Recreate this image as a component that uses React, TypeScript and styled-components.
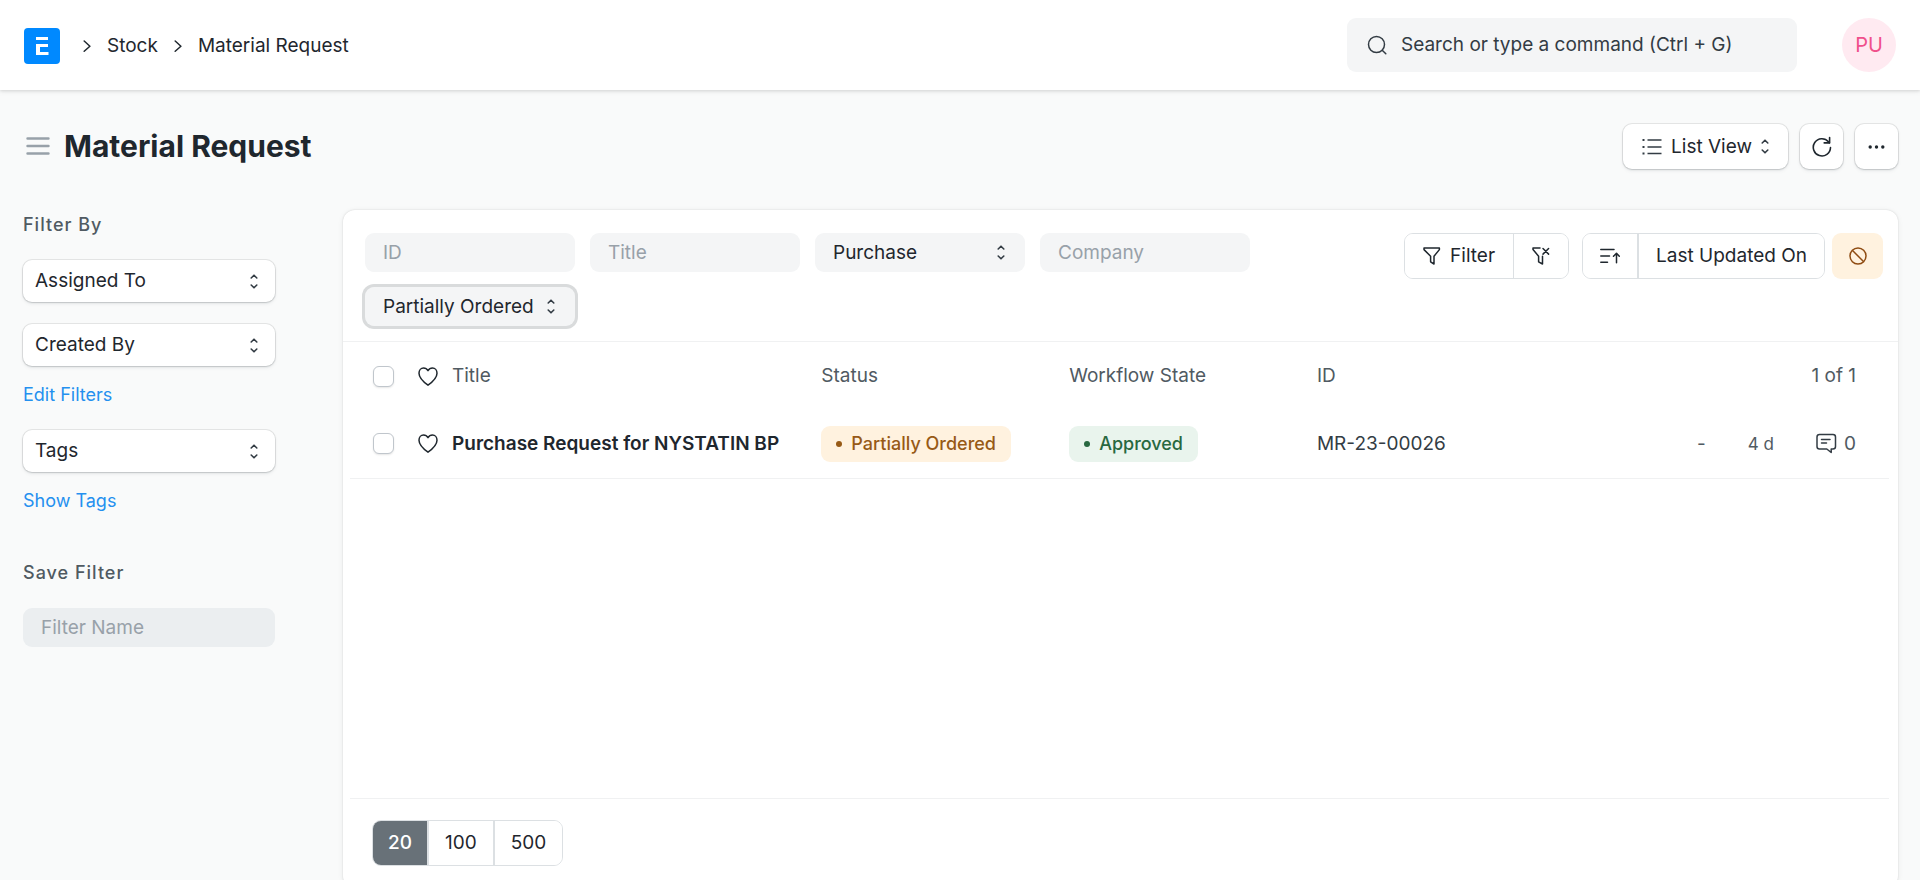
import React from "react";
import styled, { createGlobalStyle } from "styled-components";

const GlobalStyle = createGlobalStyle`
  *, *::before, *::after { box-sizing: border-box; }
  body {
    margin: 0;
    background: #f9fafa;
    color: #1f272e;
    font-family: Inter, "Liberation Sans", sans-serif;
    font-size: 19px;
    line-height: 30px;
    -webkit-font-smoothing: antialiased;
  }
  button, input, select { font: inherit; color: inherit; margin: 0; }
  button { cursor: pointer; }
  h1, h2 { margin: 0; }
  svg { display: block; flex: none; }
`;

const Navbar = styled.header`
  height: 90px;
  padding: 0 24px;
  display: flex;
  align-items: center;
  justify-content: space-between;
  background: #fff;
  box-shadow: 0 1px 3px rgba(0, 0, 0, 0.12), 0 2px 6px rgba(0, 0, 0, 0.05);
`;

const Breadcrumbs = styled.nav`
  display: flex;
  align-items: center;
  gap: 16px;
  padding-top: 1px;
`;

const HomeLink = styled.a`
  display: block;
  margin-right: 7px;
`;

const Crumb = styled.a`
  color: #1f272e;
  text-decoration: none;
`;

const NavRight = styled.div`
  display: flex;
  align-items: center;
  gap: 45px;
`;

const SearchBox = styled.label`
  display: flex;
  align-items: center;
  gap: 14px;
  width: 450px;
  height: 54px;
  padding: 0 20px;
  border-radius: 9px;
  background: #f4f5f6;
  color: #333c44;
`;

const SearchInput = styled.input`
  flex: 1;
  min-width: 0;
  padding: 0;
  border: 0;
  outline: 0;
  background: none;
  &::placeholder { color: #333c44; opacity: 1; }
`;

const Avatar = styled.button`
  width: 54px;
  height: 54px;
  padding: 0;
  border: 0;
  border-radius: 50%;
  background: #ffeaf1;
  color: #f0508c;
  font-size: 20px;
`;

const PageHead = styled.div`
  display: flex;
  align-items: center;
  justify-content: space-between;
  height: 113px;
  padding: 0 22px 0 25px;
`;

const TitleGroup = styled.div`
  display: flex;
  align-items: center;
  gap: 12px;
  padding-bottom: 2px;
`;

const MenuToggle = styled.button`
  padding: 0;
  border: 0;
  background: none;
  color: #98a1a9;
`;

const PageTitle = styled.h1`
  font-size: 30px;
  line-height: 40px;
  font-weight: 700;
`;

const HeadActions = styled.div`
  display: flex;
  gap: 12px;
`;

const raised = `
  border: 0;
  background: #fff;
  box-shadow: 0 0 0 1px rgba(0, 0, 0, 0.08), 0 1px 2px rgba(25, 39, 52, 0.14), 0 2px 4px rgba(25, 39, 52, 0.06);
`;

const HeadButton = styled.button<{ $square?: boolean }>`
  ${raised}
  display: flex;
  align-items: center;
  justify-content: center;
  gap: 9px;
  height: 45px;
  width: ${(p) => (p.$square ? "43px" : "auto")};
  padding: ${(p) => (p.$square ? "0" : "0 19px")};
  border-radius: 9px;
`;

const Layout = styled.div`
  display: flex;
  align-items: flex-start;
  padding: 7px 22px 0 23px;
`;

const Sidebar = styled.aside`
  flex: none;
  width: 252px;
  margin-right: 68px;
  padding-top: 1px;
`;

const SideHeading = styled.h2`
  margin-bottom: 21px;
  font-size: 18px;
  line-height: 28px;
  font-weight: 500;
  letter-spacing: 1px;
  color: #505a62;
`;

const SelectWrap = styled.div`
  position: relative;
`;

const SelectIcon = styled.span<{ $right: number }>`
  position: absolute;
  top: 0;
  bottom: 0;
  right: ${(p) => p.$right}px;
  display: flex;
  align-items: center;
  pointer-events: none;
`;

const SideSelect = styled.select`
  ${raised}
  appearance: none;
  display: block;
  width: 100%;
  height: 42px;
  padding: 0 12px;
  border-radius: 9px;
`;

const SideFilters = styled.div`
  display: grid;
  gap: 22px;
`;

const SideLink = styled.a`
  display: block;
  margin: 15px 0 21px;
  font-size: 18px;
  line-height: 28px;
  color: #2490ef;
  text-decoration: none;
`;

const SaveFilter = styled.section`
  padding-top: 23px;
`;

const FieldInput = styled.input<{ $dark?: boolean }>`
  display: block;
  width: 100%;
  height: 39px;
  padding: 0 18px;
  border: 0;
  border-radius: 9px;
  background: ${(p) => (p.$dark ? "#ebeef0" : "#f4f5f6")};
  &::placeholder { color: #98a1a9; opacity: 1; }
`;

const FieldSelect = styled.select<{ $focused?: boolean }>`
  appearance: none;
  display: block;
  width: 100%;
  height: 39px;
  padding: 0 18px;
  border: 0;
  border-radius: 9px;
  background: #f4f5f6;
  outline: 0;
  box-shadow: ${(p) => (p.$focused ? "0 0 0 3px #d9dbdc" : "none")};
`;

const Panel = styled.main`
  flex: 1;
  min-width: 0;
  border-radius: 12px;
  background: #fff;
  box-shadow: 0 0 2px rgba(0, 0, 0, 0.14), 0 1px 6px rgba(0, 0, 0, 0.06);
`;

const FilterBar = styled.div`
  display: flex;
  align-items: flex-start;
  justify-content: space-between;
  gap: 24px;
  padding: 23px 15px 15px 22px;
  border-bottom: 1px solid #f0f1f2;
`;

const StandardFilters = styled.div`
  display: grid;
  grid-template-columns: repeat(4, 210px);
  gap: 15px;
`;

const FilterActions = styled.div`
  display: flex;
  flex: none;
`;

const ButtonGroup = styled.div`
  display: flex;
  height: 46px;
  border: 1px solid #dce0e3;
  border-radius: 9px;
  overflow: hidden;
  & + & { margin-left: 13px; }
`;

const GroupButton = styled.button<{ $rule?: number; $pad: number; $active?: boolean }>`
  display: flex;
  align-items: center;
  gap: 9px;
  padding: 0 ${(p) => p.$pad}px;
  border: 0;
  border-left: ${(p) => p.$rule || 0}px solid #dce0e3;
  background: ${(p) => (p.$active ? "#687178" : "#fff")};
  color: ${(p) => (p.$active ? "#fff" : "#1f272e")};
  font-weight: ${(p) => (p.$active ? 500 : 400)};
`;

const WarnButton = styled.button`
  display: flex;
  align-items: center;
  justify-content: center;
  width: 51px;
  height: 46px;
  margin-left: 7px;
  padding: 0;
  border: 0;
  border-radius: 9px;
  background: #fff2df;
  color: #8f4c12;
`;

const ListArea = styled.div`
  min-height: calc(100vh - 423px);
  margin: 0 9px 0 7px;
  border-bottom: 1px solid #f0f1f2;
`;

const List = styled.table`
  width: 100%;
  table-layout: fixed;
  border-collapse: collapse;
  th, td { height: 68px; padding: 0; text-align: left; font-weight: 400; }
  th { color: #505a62; }
  td { color: #333c44; border-bottom: 1px solid #f0f1f2; }
  th:first-child, td:first-child { width: 102px; padding-left: 23px; }
  th:last-child, td:last-child { padding-right: 33px; text-align: right; }
`;

const Col = styled.col<{ $w?: string }>`
  width: ${(p) => p.$w || "auto"};
`;

const Marks = styled.div`
  display: flex;
  align-items: center;
  gap: 24px;
  color: #1f272e;
`;

const Check = styled.input`
  appearance: none;
  flex: none;
  width: 21px;
  height: 21px;
  margin: 0;
  border: 1px solid #c0c6cc;
  border-radius: 6px;
  background: #fff;
  box-shadow: 0 1px 2px rgba(0, 0, 0, 0.1);
`;

const LikeButton = styled.button`
  padding: 0;
  border: 0;
  background: none;
`;

const TitleLink = styled.a`
  color: #1f272e;
  font-weight: 600;
  text-decoration: none;
  white-space: nowrap;
`;

const Pill = styled.span<{ $tone: "orange" | "green" }>`
  display: inline-flex;
  align-items: center;
  gap: 9px;
  height: 36px;
  padding: 0 15px;
  border-radius: 9px;
  font-size: 18px;
  font-weight: 500;
  vertical-align: middle;
  background: ${(p) => (p.$tone === "orange" ? "#fff2df" : "#e9f4ed")};
  color: ${(p) => (p.$tone === "orange" ? "#975a16" : "#286840")};
  &::before {
    content: "";
    width: 6px;
    height: 6px;
    border-radius: 50%;
    background: currentColor;
  }
`;

const Activity = styled.div`
  display: flex;
  align-items: center;
  justify-content: flex-end;
  gap: 42px;
  color: #505a62;
`;

const Age = styled.span`
  font-size: 17px;
`;

const Comments = styled.span`
  display: flex;
  align-items: center;
  gap: 7px;
`;

const Paging = styled.footer`
  display: flex;
  padding: 21px 29px 22px;
`;

const Chevron = () => (
  <svg width="8" height="12" viewBox="0 0 8 12" fill="none" stroke="#1f272e" strokeWidth="1.5" strokeLinecap="round" strokeLinejoin="round">
    <path d="M1.2 1 6.900 6.200 1.200 11.200" />
  </svg>
);

const UpDown = () => (
  <svg width="8" height="15" viewBox="0 0 8 15" fill="none" stroke="#333c44" strokeWidth="1.6" strokeLinecap="round" strokeLinejoin="round">
    <path d="M1.2 4 4 1.2 6.8 4M1.2 11 4 13.8 6.8 11" />
  </svg>
);

const Heart = () => (
  <svg width="20" height="19" viewBox="0 0 20 19" fill="none" stroke="#1f272e" strokeWidth="1.5" strokeLinejoin="round">
    <path d="M10 3.6C8.8 1.6 7.3 1 5.5 1 3 1 1 3 1 6.200c0 5 4.500 8.700 9 12 4.500-3.300 9-7 9-12C19 3 17 1 14.500 1 12.700 1 11.200 1.600 10 3.600Z" />
  </svg>
);

const funnel = "M1 1H16.400V2.600L11 9.200V17L7.600 14.800V9.200L1 2.600Z";

function Pick({ label, options = [] }: { label: string; options?: string[] }) {
  return (
    <SelectWrap>
      <SideSelect aria-label={label} defaultValue={label}>
        {[label, ...options].map((o) => <option key={o}>{o}</option>)}
      </SideSelect>
      <SelectIcon $right={17}><UpDown /></SelectIcon>
    </SelectWrap>
  );
}

export default function App() {
  return (
    <>
      <GlobalStyle />
      <Navbar>
        <Breadcrumbs aria-label="Breadcrumb">
          <HomeLink href="#" aria-label="Home">
            <svg width="36" height="36" viewBox="0 0 36 36">
              <rect width="36" height="36" rx="4" fill="#0089ff" />
              <path d="M12 9H24V12H12ZM12 16H24V19H16V24H24.500V27H12Z" fill="#fff" />
            </svg>
          </HomeLink>
          <Chevron />
          <Crumb href="#">Stock</Crumb>
          <Chevron />
          <Crumb href="#">Material Request</Crumb>
        </Breadcrumbs>
        <NavRight>
          <SearchBox>
            <svg width="20" height="20" viewBox="0 0 20 20" fill="none" stroke="#333c44" strokeWidth="1.5" strokeLinecap="round">
              <circle cx="9.500" cy="9.500" r="8" />
              <path d="m15.200 15.200 3.600 3.600" />
            </svg>
            <SearchInput aria-label="Search" placeholder="Search or type a command (Ctrl + G)" />
          </SearchBox>
          <Avatar>PU</Avatar>
        </NavRight>
      </Navbar>

      <PageHead>
        <TitleGroup>
          <MenuToggle aria-label="Toggle sidebar">
            <svg width="27" height="20" viewBox="0 0 27 20" stroke="#98a1a9" strokeWidth="2.400" strokeLinecap="round">
              <path d="M2.500 2.500H23.500M2.500 10H23.500M2.500 17.500H23.500" />
            </svg>
          </MenuToggle>
          <PageTitle>Material Request</PageTitle>
        </TitleGroup>
        <HeadActions>
          <HeadButton>
            <svg width="20" height="17" viewBox="0 0 20 17" stroke="#333c44" strokeWidth="1.600">
              <path d="M5.500 2H19.500M5.500 9H19.500M5.500 15.500H19.500" />
              <path d="M.5 2H2.500M.5 9H2.500M.5 15.500H2.500" strokeWidth="2" />
            </svg>
            List View
            <UpDown />
          </HeadButton>
          <HeadButton $square aria-label="Refresh">
            <svg width="20" height="22" viewBox="0 0 20 22" fill="none" stroke="#1f272e" strokeWidth="1.600" strokeLinecap="round" strokeLinejoin="round">
              <path d="M18.500 11.500A8.600 8.600 0 1 1 16.500 5.800L17.300 6.800" />
              <path d="M17.600 1.500V6.900H12.200" />
            </svg>
          </HeadButton>
          <HeadButton $square aria-label="More">
            <svg width="17" height="4" viewBox="0 0 17 4" fill="#1f272e">
              <circle cx="2.200" cy="2" r="1.700" /><circle cx="8.500" cy="2" r="1.700" /><circle cx="14.800" cy="2" r="1.700" />
            </svg>
          </HeadButton>
        </HeadActions>
      </PageHead>

      <Layout>
        <Sidebar>
          <SideHeading>Filter By</SideHeading>
          <SideFilters>
            <Pick label="Assigned To" />
            <Pick label="Created By" />
          </SideFilters>
          <SideLink href="#">Edit Filters</SideLink>
          <Pick label="Tags" />
          <SideLink href="#">Show Tags</SideLink>
          <SaveFilter>
            <SideHeading>Save Filter</SideHeading>
            <FieldInput $dark aria-label="Filter Name" placeholder="Filter Name" />
          </SaveFilter>
        </Sidebar>

        <Panel>
          <FilterBar>
            <StandardFilters>
              <FieldInput aria-label="ID" placeholder="ID" />
              <FieldInput aria-label="Title" placeholder="Title" />
              <SelectWrap>
                <FieldSelect aria-label="Purpose" defaultValue="Purchase">
                  <option>Purchase</option>
                </FieldSelect>
                <SelectIcon $right={20}><UpDown /></SelectIcon>
              </SelectWrap>
              <FieldInput aria-label="Company" placeholder="Company" />
              <SelectWrap>
                <FieldSelect $focused aria-label="Status" defaultValue="Partially Ordered">
                  <option>Partially Ordered</option>
                </FieldSelect>
                <SelectIcon $right={20}><UpDown /></SelectIcon>
              </SelectWrap>
            </StandardFilters>
            <FilterActions>
              <ButtonGroup>
                <GroupButton $pad={18}>
                  <svg width="18" height="18" viewBox="0 0 18 18" fill="none" stroke="#1f272e" strokeWidth="1.500" strokeLinejoin="round">
                    <path d={funnel} />
                  </svg>
                  Filter
                </GroupButton>
                <GroupButton $pad={18} $rule={1} aria-label="Clear filters">
                  <svg width="18" height="18" viewBox="0 0 18 18" fill="none" stroke="#1f272e" strokeWidth="1.500" strokeLinejoin="round" strokeLinecap="round">
                    <path d="M8 1H1V2.600L6.600 9.200V14.800L10.500 17V9.200" />
                    <path d="m11 1.500 5.600 5.600M16.600 1.500 11 7.100" />
                  </svg>
                </GroupButton>
              </ButtonGroup>
              <ButtonGroup>
                <GroupButton $pad={17} aria-label="Sort direction">
                  <svg width="20" height="16" viewBox="0 0 20 16" fill="none" stroke="#1f272e" strokeWidth="1.500" strokeLinecap="round" strokeLinejoin="round">
                    <path d="M.8 1.500H14M.8 8H9.500M.8 14.200H7.500M16.500 14.800V5.500M13.500 8.200 16.500 5.200 19.300 8.200" />
                  </svg>
                </GroupButton>
                <GroupButton $pad={17} $rule={2}>Last Updated On</GroupButton>
              </ButtonGroup>
              <WarnButton aria-label="Clear all">
                <svg width="18" height="18" viewBox="0 0 18 18" fill="none" stroke="#8f4c12" strokeWidth="1.500">
                  <circle cx="9" cy="9" r="8" /><path d="m3.300 3.300 11.400 11.400" />
                </svg>
              </WarnButton>
            </FilterActions>
          </FilterBar>

          <ListArea>
            <List>
              <colgroup>
                <Col $w="102px" />
                <Col $w="24%" />
                <Col $w="16.1%" />
                <Col $w="16.1%" />
                <Col $w="16.1%" />
                <Col />
              </colgroup>
              <thead>
                <tr>
                  <th>
                    <Marks><Check type="checkbox" aria-label="Select all" /><LikeButton aria-label="Liked"><Heart /></LikeButton></Marks>
                  </th>
                  <th>Title</th>
                  <th>Status</th>
                  <th>Workflow State</th>
                  <th>ID</th>
                  <th>1 of 1</th>
                </tr>
              </thead>
              <tbody>
                <tr>
                  <td>
                    <Marks><Check type="checkbox" aria-label="Select row" /><LikeButton aria-label="Like"><Heart /></LikeButton></Marks>
                  </td>
                  <td><TitleLink href="#">Purchase Request for NYSTATIN BP</TitleLink></td>
                  <td><Pill $tone="orange">Partially Ordered</Pill></td>
                  <td><Pill $tone="green">Approved</Pill></td>
                  <td>MR-23-00026</td>
                  <td>
                    <Activity>
                      <span>-</span>
                      <Age>4 d</Age>
                      <Comments>
                        <svg width="21" height="21" viewBox="0 0 21 21" fill="none" stroke="#333c44" strokeWidth="1.500" strokeLinecap="round" strokeLinejoin="round">
                          <path d="M3.500 1.500H17Q19.500 1.500 19.500 4V13.500Q19.500 16 17 16H15.200V19.500L10.800 16H3.500Q1 16 1 13.500V4Q1 1.500 3.500 1.500Z" />
                          <path d="M5.500 6.500H14M5.500 10H10.500" />
                        </svg>
                        0
                      </Comments>
                    </Activity>
                  </td>
                </tr>
              </tbody>
            </List>
          </ListArea>

          <Paging>
            <ButtonGroup>
              <GroupButton $pad={15} $active>20</GroupButton>
              <GroupButton $pad={16} $rule={2}>100</GroupButton>
              <GroupButton $pad={16} $rule={2}>500</GroupButton>
            </ButtonGroup>
          </Paging>
        </Panel>
      </Layout>
    </>
  );
}
